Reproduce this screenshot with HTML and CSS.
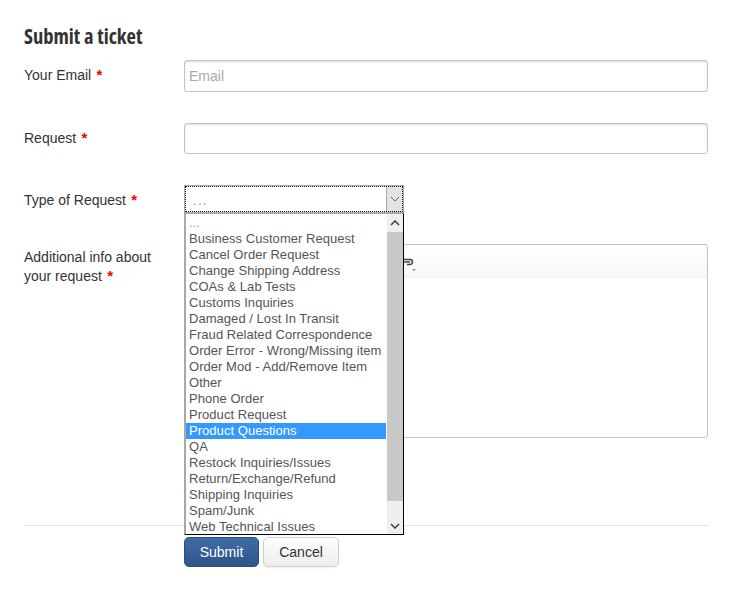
FILE: index.html
```html
<!DOCTYPE html>
<html lang="en">
<head>
<meta charset="utf-8">
<title>Submit a ticket</title>
<link rel="stylesheet" href="styles.css">
</head>
<body>
<form class="form">
  <h1 class="title">Submit a ticket</h1>
  <div class="row row-email">
    <label class="label">Your Email <span class="req">*</span></label>
    <input class="input" type="text" placeholder="Email">
  </div>
  <div class="row row-request">
    <label class="label">Request <span class="req">*</span></label>
    <input class="input input-b" type="text">
  </div>
  <div class="row row-type">
    <label class="label">Type of Request <span class="req">*</span></label>
    <div class="select">
      <div class="select-inner">
        <span class="select-value">...</span>
        <span class="select-btn">
          <svg width="10" height="6" viewBox="0 0 10 6"><path d="M1 1l4 4 4-4" fill="none" stroke="#666" stroke-width="1"/></svg>
        </span>
      </div>
    </div>
  </div>
  <div class="row row-info">
    <label class="label">Additional info about your request <span class="req">*</span></label>
    <div class="editor">
      <div class="toolbar">
        <svg class="link-icon" width="11" height="8" viewBox="0 0 11 8"><path d="M0 1.500h6a2.500 2.500 0 0 1 0 5H3M0 4h6" fill="none" stroke="#444" stroke-width="1.500"/></svg>
        <span class="caret"></span>
      </div>
    </div>
  </div>
  <hr class="rule">
  <div class="actions">
    <button class="btn btn-primary" type="button">Submit</button>
    <button class="btn btn-default" type="button">Cancel</button>
  </div>
  <div class="dropdown">
    <ul class="options">
      <li class="muted">...</li>
      <li>Business Customer Request</li>
      <li>Cancel Order Request</li>
      <li>Change Shipping Address</li>
      <li>COAs &amp; Lab Tests</li>
      <li>Customs Inquiries</li>
      <li>Damaged / Lost In Transit</li>
      <li>Fraud Related Correspondence</li>
      <li>Order Error - Wrong/Missing item</li>
      <li>Order Mod - Add/Remove Item</li>
      <li>Other</li>
      <li>Phone Order</li>
      <li>Product Request</li>
      <li class="active">Product Questions</li>
      <li>QA</li>
      <li>Restock Inquiries/Issues</li>
      <li>Return/Exchange/Refund</li>
      <li>Shipping Inquiries</li>
      <li>Spam/Junk</li>
      <li>Web Technical Issues</li>
    </ul>
    <div class="scrollbar">
      <span class="sb-arrow"><svg width="10" height="6" viewBox="0 0 10 6"><path d="M1 5l4-4 4 4" fill="none" stroke="#444" stroke-width="1.6"/></svg></span>
      <span class="sb-thumb"></span>
      <span class="sb-rest"><svg width="10" height="6" viewBox="0 0 10 6"><path d="M1 1l4 4 4-4" fill="none" stroke="#444" stroke-width="1.6"/></svg></span>
    </div>
  </div>
</form>
</body>
</html>
```
FILE: styles.css
```css
* { box-sizing: border-box; }
html, body { margin: 0; padding: 0; background: #fff; }
body { font-family: "Liberation Sans", Arial, sans-serif; font-size: 14px; color: #333; }
.form { position: relative; width: 732px; height: 604px; padding: 24px 24px 0; }
.title {
  margin: 0;
  height: 24px;
  font-family: "Open Sans", sans-serif;
  font-stretch: 75%;
  font-size: 20.5px;
  line-height: 24px;
  font-weight: 700;
  color: #333;
}
.row { display: grid; grid-template-columns: 160px 524px; align-items: start; }
.row-email { margin-top: 12px; height: 63px; }
.row-request { height: 62px; }
.row-type { height: 59px; }
.row-info { height: 281px; }
.label { display: block; font-size: 14px; line-height: 18px; padding-top: 6px; color: #333; width: 135px; }
.row-info .label { padding-top: 4px; line-height: 19px; }
.req { color: #e00; font-weight: 700; font-size: 15px; line-height: 0; margin-left: 1.500px; }
.input {
  display: block;
  width: 524px;
  height: 32px;
  padding: 0 4px;
  border: 1px solid #c4c4c4;
  border-radius: 3px;
  box-shadow: inset 0 1px 2px rgba(0,0,0,.15);
  background: #fff;
  font-family: inherit;
  font-size: 14px;
  color: #333;
  outline: none;
}
.input-b { height: 31px; }
.input::placeholder { color: #aaa; opacity: 1; }
.select {
  width: 220px;
  height: 28px;
  border: 1px solid #aaa;
  background: #fff;
}
.select-inner {
  display: flex;
  height: 100%;
  outline: 1px dotted #111;
  outline-offset: -1px;
}
.select-value { flex: 1; padding: 4px 0 0 8px; color: #a89f8c; font-size: 14px; line-height: 20px; letter-spacing: 1px; }
.select-btn {
  width: 17px;
  background: #e3e3e3;
  border-left: 1px solid #aaa;
  display: flex;
  align-items: center;
  justify-content: center;
}
.editor { width: 524px; height: 194px; border: 1px solid #c4c4c4; border-radius: 3px; background: #fff; }
.toolbar {
  position: relative;
  height: 33px;
  border-bottom: 1px solid #f0f0f0;
  background: linear-gradient(#fff, #f8f8f8);
  border-radius: 3px 3px 0 0;
}
.link-icon { position: absolute; left: 219px; top: 13px; }
.caret {
  position: absolute;
  left: 227px;
  top: 24px;
  width: 0;
  height: 0;
  border-left: 2px solid transparent;
  border-right: 2px solid transparent;
  border-top: 2px solid #888;
}
.rule { margin: 0; height: 1px; border: 0; background: #e5e5e5; }
.actions { display: flex; gap: 4px; margin: 11px 0 0 160px; }
.btn {
  height: 30px;
  border-radius: 5px;
  font-family: inherit;
  font-size: 14px;
  padding: 0;
}
.btn-primary {
  width: 75px;
  color: #fff;
  border: 1px solid #2b4d80;
  background: linear-gradient(#3f6ca6, #2f5488);
}
.btn-default {
  width: 76px;
  color: #333;
  border: 1px solid #d0d0d0;
  background: linear-gradient(#fff, #ececec);
  box-shadow: 0 1px 2px rgba(0,0,0,.08);
}
.dropdown {
  position: absolute;
  left: 184px;
  top: 213px;
  width: 220px;
  height: 322px;
  display: flex;
  background: #fff;
  border-left: 2px solid #a8a8a8;
  border-top: 1px solid #a8a8a8;
  border-right: 1px solid #000;
  border-bottom: 1px solid #000;
}
.options { flex: 1; margin: 0; padding: 1px 0 0; list-style: none; font-size: 13px; letter-spacing: .04px; line-height: 16px; color: #555; overflow: hidden; min-width: 0; }
.options li { padding-left: 3px; white-space: nowrap; height: 16px; }
.options .muted { color: #a89f8c; }
.options .active { background: #3399ff; color: #fff; margin-right: 1px; }
.scrollbar { width: 16px; display: flex; flex-direction: column; background: #efefef; }
.sb-arrow { height: 18px; display: flex; align-items: center; justify-content: center; }
.sb-thumb { height: 269px; background: #c8c8c8; }
.sb-rest { flex: 1; display: flex; align-items: flex-end; justify-content: center; padding-bottom: 5px; }
```
